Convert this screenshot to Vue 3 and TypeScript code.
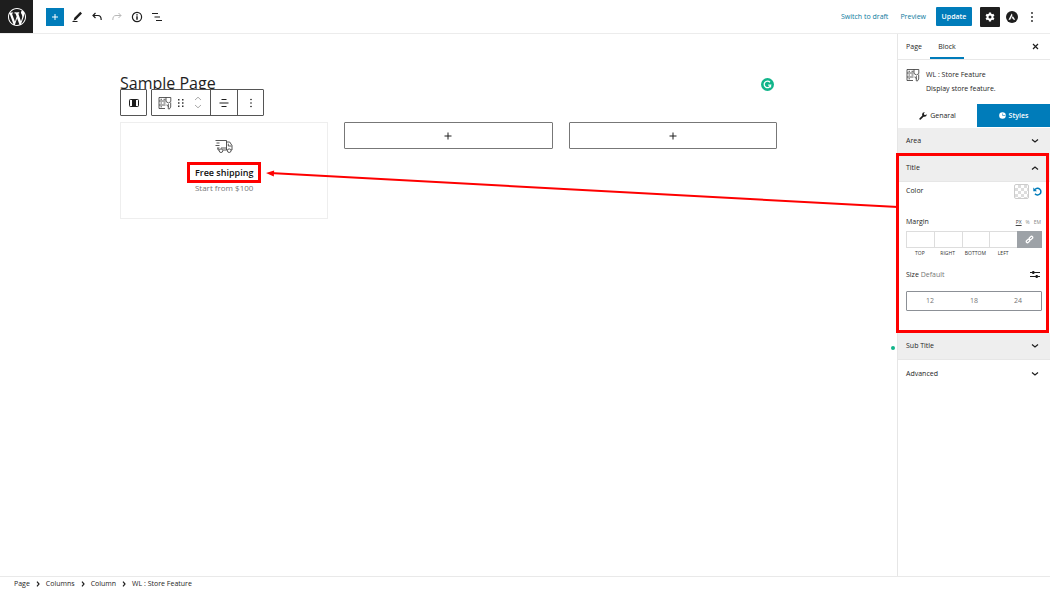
<script setup lang="ts">
import { nextTick, onBeforeUnmount, onMounted, reactive, ref } from 'vue'

const crumbs = ['Page', 'Columns', 'Column', 'WL : Store Feature']
const sides = ['Top', 'Right', 'Bottom', 'Left']
const units = ['PX', '%', 'EM']
const sizes = [12, 18, 24]
const margins = reactive<Record<string, string>>({ Top: '', Right: '', Bottom: '', Left: '' })
const unit = ref('PX')

const root = ref<HTMLElement | null>(null)
const label = ref<HTMLElement | null>(null)
const panel = ref<HTMLElement | null>(null)
const arrow = reactive({ x1: 0, y1: 0, x2: 0, y2: 0, head: '' })

function placeArrow() {
  if (!root.value || !label.value || !panel.value) return
  const r = root.value.getBoundingClientRect()
  const a = label.value.getBoundingClientRect()
  const b = panel.value.getBoundingClientRect()
  arrow.x1 = Math.round(b.left - r.left)
  arrow.y1 = Math.round(b.top - r.top + 52)
  arrow.x2 = Math.round(a.right - r.left + 5)
  arrow.y2 = Math.round(a.top - r.top + a.height / 2)
  const d = Math.atan2(arrow.y1 - arrow.y2, arrow.x1 - arrow.x2)
  const pt = (along: number, side: number) =>
    `${arrow.x2 + along * Math.cos(d) - side * Math.sin(d)},${arrow.y2 + along * Math.sin(d) + side * Math.cos(d)}`
  arrow.head = `${pt(0, 0)} ${pt(8, -3)} ${pt(8, 3)}`
}

onMounted(async () => {
  await nextTick()
  placeArrow()
  window.addEventListener('resize', placeArrow)
})
onBeforeUnmount(() => window.removeEventListener('resize', placeArrow))
</script>

<template>
  <div ref="root" class="editor">
    <header class="topbar">
      <a class="logo" href="#" aria-label="WordPress">
        <svg width="18" height="18" viewBox="0 0 20 20" fill="#fff"><path d="M20 10c0-5.51-4.49-10-10-10C4.48 0 0 4.49 0 10c0 5.52 4.48 10 10 10 5.51 0 10-4.48 10-10zM7.78 15.37L4.37 6.22c.55-.02 1.17-.08 1.17-.08.5-.06.44-1.13-.06-1.11 0 0-1.45.11-2.37.11-.18 0-.37 0-.58-.01C4.12 2.69 6.87 1.11 10 1.11c2.33 0 4.45.87 6.05 2.34-.68-.11-1.65.39-1.65 1.58 0 .74.45 1.36.9 2.1.35.61.55 1.36.55 2.46 0 1.49-1.4 5-1.4 5l-3.03-8.37c.54-.02.82-.17.82-.17.5-.05.44-1.25-.06-1.22 0 0-1.44.12-2.38.12-.87 0-2.33-.12-2.33-.12-.5-.03-.56 1.2-.06 1.22l.92.08 1.26 3.41zM17.41 10c.24-.64.74-1.87.43-4.25.7 1.29 1.05 2.71 1.05 4.25 0 3.29-1.73 6.24-4.4 7.78.97-2.59 1.94-5.2 2.92-7.78zM6.1 18.09C3.12 16.65 1.11 13.53 1.11 10c0-1.3.23-2.48.72-3.59C3.25 10.3 4.67 14.2 6.1 18.09zm4.03-6.63l2.58 6.98c-.86.29-1.76.45-2.71.45-.79 0-1.57-.11-2.29-.33.81-2.38 1.62-4.74 2.42-7.1z" /></svg>
      </a>
      <div class="tools">
        <button class="insert" type="button" aria-label="Add block">
          <svg width="8" height="8" viewBox="0 0 8 8" stroke="#fff" stroke-width="1"><path d="M4 1v6M1 4h6" /></svg>
        </button>
        <button class="tool" type="button" aria-label="Edit">
          <svg width="12" height="12" viewBox="0 0 12 12"><path d="M9.300 .8l1.700 1.600-5.600 5.900-2.900 1.400.9-2.900z" fill="#1e1e1e" /><path d="M1.500 10.500h5" stroke="#1e1e1e" /></svg>
        </button>
        <button class="tool" type="button" aria-label="Undo">
          <svg width="12" height="12" viewBox="0 0 12 12" fill="none" stroke="#1e1e1e" stroke-width="1.200"><path d="M4.500 2L2 4.500 4.500 7M2 4.500h5c2.200 0 3.200 1.500 3.200 4.500" /></svg>
        </button>
        <button class="tool" type="button" aria-label="Redo" disabled>
          <svg width="12" height="12" viewBox="0 0 12 12" fill="none" stroke="#b8b8b8"><path d="M7.500 2L10 4.500 7.500 7M10 4.500H5C2.800 4.500 1.800 6 1.800 9" /></svg>
        </button>
        <button class="tool" type="button" aria-label="Details">
          <svg width="12" height="12" viewBox="0 0 12 12" fill="none" stroke="#1e1e1e"><circle cx="6" cy="6" r="4.600" stroke-width="1.200" /><path d="M6 5.300v3.400M6 3.200v1.200" stroke-width="1.500" /></svg>
        </button>
        <button class="tool" type="button" aria-label="List view">
          <svg width="12" height="12" viewBox="0 0 12 12" stroke="#1e1e1e" stroke-width="1.200"><path d="M1 2.500h6M3.500 6h5.500M5 9.500h6" /></svg>
        </button>
      </div>
      <div class="actions">
        <button class="link" type="button">Switch to draft</button>
        <button class="link" type="button">Preview</button>
        <button class="update" type="button">Update</button>
        <button class="settings" type="button" aria-label="Settings">
          <svg width="12" height="12" viewBox="0 0 12 12"><g stroke="#fff" stroke-width="2.200"><path d="M6 1.500v9M2.100 3.800l7.800 4.400M2.100 8.200l7.800-4.400" /></g><circle cx="6" cy="6" r="3.400" fill="#fff" /><circle cx="6" cy="6" r="1.500" fill="#1e1e1e" /></svg>
        </button>
        <button class="plain" type="button" aria-label="Astra settings">
          <svg width="12" height="12" viewBox="0 0 12 12"><circle cx="6" cy="6" r="6" fill="#1e1e1e" /><path d="M5.700 2.500L2.500 8.800h1.700l2.300-4.700zM6.800 5.100L5.600 7.500h1.300l.6 1.300h1.700z" fill="#fff" /></svg>
        </button>
        <button class="plain" type="button" aria-label="Options">
          <svg width="12" height="12" viewBox="0 0 12 12" fill="#1e1e1e"><circle cx="6" cy="2" r=".9" /><circle cx="6" cy="6" r=".9" /><circle cx="6" cy="10" r=".9" /></svg>
        </button>
      </div>
    </header>

    <div class="body">
      <main class="canvas">
        <div class="content">
          <div class="title-row">
            <h1>Sample Page</h1>
            <svg class="grammarly" width="13" height="13" viewBox="0 0 13 13"><circle cx="6.500" cy="6.500" r="6.500" fill="#11b58a" /><path d="M9 4.200A3.300 3.300 0 1 0 9.700 7.200H7.200M9.500 7v2.500" fill="none" stroke="#fff" stroke-width="1.300" /></svg>
          </div>
          <div class="columns">
            <div class="block-toolbar" role="toolbar" aria-label="Block tools">
              <div class="group">
                <button class="parent" type="button" aria-label="Select column">
                  <svg width="12" height="12" viewBox="0 0 12 12"><rect x="1.500" y="2.500" width="9" height="7" rx=".8" fill="#fff" stroke="#1e1e1e" /><path d="M4 2h4v8H4z" fill="#1e1e1e" /></svg>
                </button>
              </div>
              <div class="group">
                <button class="kind" type="button" aria-label="Store Feature">
                  <svg width="14" height="14" viewBox="0 0 14 14" fill="none" stroke="#333" stroke-width=".8"><path d="M8 1.500H1V5h6.500M1 5v4h6.500M1 9v3.500h6M2.500 3.300h1.500M2.500 7h1.500M2.500 10.800h1.500M5.500 3.300h2M5.500 7h2M8 1.500h4.800v4L10.500 7 8 5.500zM8.500 9l2 1.500M10.300 8v5M12.700 6.500V11L11 13.500" /></svg>
                </button>
                <button class="drag" type="button" aria-label="Drag">
                  <svg width="8" height="10" viewBox="0 0 8 10" fill="#333"><path d="M1 1h1.500v1.500H1zM5 1h1.500v1.500H5zM1 4.300h1.500v1.500H1zM5 4.300h1.500v1.500H5zM1 7.600h1.500v1.500H1zM5 7.600h1.500v1.500H5z" /></svg>
                </button>
                <div class="movers">
                  <button type="button" aria-label="Move up" disabled>
                    <svg width="8" height="5" viewBox="0 0 8 5" fill="none" stroke="#aaa"><path d="M1 4l3-2.800L7 4" /></svg>
                  </button>
                  <button type="button" aria-label="Move down" disabled>
                    <svg width="8" height="5" viewBox="0 0 8 5" fill="none" stroke="#aaa"><path d="M1 1l3 2.800L7 1" /></svg>
                  </button>
                </div>
                <button class="cell" type="button" aria-label="Align">
                  <svg width="10" height="10" viewBox="0 0 10 10" stroke="#1e1e1e"><path d="M2.500 1.500h5M.5 5h9M2.500 8.500h5" /></svg>
                </button>
                <button class="cell" type="button" aria-label="More">
                  <svg width="10" height="10" viewBox="0 0 10 10" fill="#1e1e1e"><circle cx="5" cy="1.500" r=".8" /><circle cx="5" cy="5" r=".8" /><circle cx="5" cy="8.500" r=".8" /></svg>
                </button>
              </div>
            </div>
            <section class="feature">
              <svg width="18" height="15" viewBox="0 0 18 15" fill="none" stroke="#444" stroke-width=".9"><path d="M3 1.500h8.500v9.500H8M4 11H3V9M11.500 3h3.200l2.300 3.500V11h-1M12.500 11h-1M13.300 4.700v2.300h3.200M.5 1.500H3M1.500 4h3M.5 6.500h4M2 9h2.500M6 9h5.500" /><circle cx="6" cy="11.700" r="1.800" /><circle cx="14.200" cy="11.700" r="1.800" /></svg>
              <h2 ref="label">Free shipping</h2>
              <p>Start from $100</p>
            </section>
            <button v-for="n in 2" :key="n" class="appender" type="button" aria-label="Add block">
              <svg width="8" height="8" viewBox="0 0 8 8" stroke="#1e1e1e"><path d="M4 .5v7M.5 4h7" /></svg>
            </button>
          </div>
        </div>
        <span class="status-dot"></span>
      </main>

      <aside class="sidebar">
        <nav class="tabs">
          <button class="tab" type="button">Page</button>
          <button class="tab active" type="button">Block</button>
          <button class="close" type="button" aria-label="Close settings">
            <svg width="7" height="7" viewBox="0 0 7 7" stroke="#1e1e1e" stroke-width="1.200"><path d="M1 1l5 5M6 1L1 6" /></svg>
          </button>
        </nav>
        <div class="card">
          <svg width="14" height="14" viewBox="0 0 14 14" fill="none" stroke="#333" stroke-width=".8"><path d="M8 1.500H1V5h6.500M1 5v4h6.500M1 9v3.500h6M2.500 3.300h1.500M2.500 7h1.500M2.500 10.800h1.500M5.500 3.300h2M5.500 7h2M8 1.500h4.800v4L10.500 7 8 5.500zM8.500 9l2 1.500M10.300 8v5M12.700 6.500V11L11 13.500" /></svg>
          <div>
            <h2>WL : Store Feature</h2>
            <p>Display store feature.</p>
          </div>
        </div>
        <div class="modes">
          <button type="button">
            <svg width="8" height="8" viewBox="0 0 8 8"><path d="M1.200 6.800l3-3" stroke="#1e1e1e" stroke-width="1.700" stroke-linecap="round" /><path d="M7.700 2.200A2.300 2.300 0 1 1 5.800.2L4.900 1.500l.2 1.300 1.300.2z" fill="#1e1e1e" /></svg>
            Genaral
          </button>
          <button class="on" type="button">
            <svg width="7" height="7" viewBox="0 0 7 7"><circle cx="3.500" cy="3.500" r="3.300" fill="#fff" /><path d="M3.600 1.500v2h2.800" fill="none" stroke="#007cba" stroke-width=".6" /></svg>
            Styles
          </button>
        </div>

        <button class="panel-head shaded" type="button">
          Area
          <svg width="8" height="6" viewBox="0 0 8 6"><path d="M1 1.500l3 2.500 3-2.500" /></svg>
        </button>

        <section ref="panel" class="title-panel">
          <button class="panel-head shaded" type="button">
            Title
            <svg width="8" height="6" viewBox="0 0 8 6"><path d="M1 4.500L4 2l3 2.500" /></svg>
          </button>
          <div class="fields">
            <div class="row color-row">
              <span>Color</span>
              <div class="color-tools">
                <button class="swatch" type="button" aria-label="Choose color"></button>
                <button class="reset" type="button" aria-label="Reset color">
                  <svg width="9" height="9" viewBox="0 0 9 9"><path d="M2 2.600A3.300 3.300 0 1 1 2 6.700" fill="none" stroke="#007cba" stroke-width="1.500" /><path d="M.3.500v3.700H4z" fill="#007cba" /></svg>
                </button>
              </div>
            </div>
            <div class="row margin-row">
              <span>Margin</span>
              <div class="units">
                <button v-for="u in units" :key="u" type="button" :class="{ on: unit === u }" @click="unit = u">{{ u }}</button>
              </div>
            </div>
            <div class="box">
              <div v-for="s in sides" :key="s" class="side">
                <input :id="'m-' + s" v-model="margins[s]" type="text" />
                <label :for="'m-' + s">{{ s }}</label>
              </div>
              <button class="chain" type="button" aria-label="Link sides">
                <svg width="9" height="9" viewBox="0 0 9 9" fill="none" stroke="#fff" stroke-width="1.300"><rect x="-2" y="-1.200" width="4" height="2.400" rx="1.200" transform="translate(3 6) rotate(-45)" /><rect x="-2" y="-1.200" width="4" height="2.400" rx="1.200" transform="translate(6 3) rotate(-45)" /></svg>
              </button>
            </div>
            <div class="row size-row">
              <span>Size <em>Default</em></span>
              <button type="button" aria-label="Set custom size">
                <svg width="10" height="9" viewBox="0 0 10 9" stroke="#1e1e1e"><path d="M0 2.500h10M0 6.500h10" stroke-width="1.200" /><path d="M3.300 1v3M6.700 5v3" stroke-width="2" /></svg>
              </button>
            </div>
            <div class="sizes">
              <button v-for="n in sizes" :key="n" type="button">{{ n }}</button>
            </div>
          </div>
        </section>

        <button class="panel-head shaded" type="button">
          Sub Title
          <svg width="8" height="6" viewBox="0 0 8 6"><path d="M1 1.500l3 2.500 3-2.500" /></svg>
        </button>
        <button class="panel-head last" type="button">
          Advanced
          <svg width="8" height="6" viewBox="0 0 8 6"><path d="M1 1.500l3 2.500 3-2.500" /></svg>
        </button>
      </aside>
    </div>

    <footer class="crumbs">
      <template v-for="(c, i) in crumbs" :key="c">
        <svg v-if="i" width="4" height="6" viewBox="0 0 4 6" fill="none" stroke="#1e1e1e" stroke-width="1.200"><path d="M1 .7L3 3 1 5.300" /></svg>
        <a href="#">{{ c }}</a>
      </template>
    </footer>

    <svg class="arrow">
      <line :x1="arrow.x1" :y1="arrow.y1" :x2="arrow.x2 + 4" :y2="arrow.y2" stroke="#fe0000" stroke-width="2" />
      <polygon :points="arrow.head" fill="#fe0000" />
    </svg>
  </div>
</template>

<style>
body {
  margin: 0;
}
</style>

<style scoped>
.editor,
.editor * {
  box-sizing: border-box;
}
.editor {
  position: relative;
  display: flex;
  flex-direction: column;
  min-height: 100vh;
  background: #fff;
  color: #1e1e1e;
  font: 7px/10px 'Open Sans', 'Noto Sans', sans-serif;
}
button {
  display: flex;
  align-items: center;
  justify-content: center;
  margin: 0;
  padding: 0;
  border: 0;
  background: none;
  color: inherit;
  font: inherit;
}
svg {
  display: block;
  flex: none;
}
h1,
h2,
p {
  margin: 0;
}
.topbar {
  display: flex;
  align-items: center;
  height: 34px;
  border-bottom: 1px solid #ececec;
}
.logo {
  display: flex;
  align-items: center;
  justify-content: center;
  width: 33px;
  height: 33px;
  background: #1e1e1e;
}
.tools {
  display: flex;
  align-items: center;
  gap: 8px;
  margin-left: 13px;
}
.insert {
  width: 18px;
  height: 18px;
  margin-right: -1px;
  background: #007cba;
}
.tool {
  width: 12px;
  height: 18px;
}
.actions {
  display: flex;
  align-items: center;
  margin-left: auto;
  padding-right: 12px;
}
.link {
  margin-right: 12px;
  color: #0d7a9e;
}
.link + .update {
  margin-left: -2px;
}
.update {
  width: 36px;
  height: 19px;
  margin-right: 8px;
  border-radius: 1px;
  background: #007cba;
  color: #fff;
  font-weight: 600;
}
.settings {
  width: 20px;
  height: 20px;
  margin-right: 6px;
  border-radius: 1px;
  background: #1e1e1e;
}
.plain + .plain {
  margin-left: 8px;
}
.body {
  display: flex;
  flex: 1;
}
.canvas {
  position: relative;
  flex: 1;
  padding: 36px 120px 0;
}
.title-row {
  position: relative;
  height: 52px;
}
h1 {
  font-size: 16px;
  font-weight: 400;
  line-height: 26px;
}
.grammarly {
  position: absolute;
  top: 8px;
  right: 3px;
}
.columns {
  position: relative;
  display: grid;
  grid-template-columns: repeat(3, 1fr);
  align-items: start;
  gap: 16px;
}
.block-toolbar {
  position: absolute;
  top: -33px;
  left: 0;
  display: flex;
  gap: 4px;
}
.group {
  display: flex;
  height: 27px;
  border: 1px solid #555;
  border-radius: 1px;
  background: #fff;
}
.group button {
  height: 100%;
}
.parent {
  width: 25px;
}
.kind {
  width: 25px;
}
.drag {
  width: 8px;
}
.movers {
  display: flex;
  flex-direction: column;
  justify-content: center;
  gap: 3px;
  width: 25px;
}
.group .movers button {
  height: 5px;
}
.group .cell {
  width: 27px;
  border-left: 1px solid #555;
}
.group .cell:last-child {
  width: 26px;
}
.feature {
  display: flex;
  flex-direction: column;
  align-items: center;
  min-height: 97px;
  padding-top: 16px;
  border: 1px solid #eee;
}
.feature h2 {
  margin-top: 8px;
  padding: 0 5px;
  border: 3px solid #fe0000;
  color: #111;
  font-size: 9px;
  font-weight: 600;
  line-height: 15px;
}
.feature p {
  color: #777;
  font-size: 8px;
  line-height: 9px;
}
.appender {
  height: 27px;
  border: 1px solid #777;
  border-radius: 1px;
}
.status-dot {
  position: absolute;
  top: 312px;
  right: 2px;
  width: 4px;
  height: 4px;
  border-radius: 50%;
  background: #11b58a;
}
.sidebar {
  flex: none;
  width: 153px;
  border-left: 1px solid #e6e6e6;
}
.tabs {
  display: flex;
  height: 26px;
  border-bottom: 1px solid #e8e8e8;
}
.tab {
  width: 32px;
  padding-top: 2px;
  border-bottom: 2px solid transparent;
}
.tab.active {
  width: 34px;
  border-color: #007cba;
}
.close {
  width: 14px;
  margin-left: auto;
  margin-right: 8px;
}
.card {
  display: flex;
  gap: 6px;
  height: 44px;
  padding: 8px;
}
.card h2 {
  font-size: 7px;
  font-weight: 400;
  line-height: 14px;
}
.card p {
  line-height: 14px;
}
.modes {
  display: flex;
  height: 24px;
}
.modes button {
  flex: 1;
  gap: 3px;
  height: 23px;
}
.modes .on {
  flex: none;
  width: 73px;
  background: #007cba;
  color: #fff;
  font-weight: 600;
}
.panel-head {
  justify-content: space-between;
  width: 100%;
  height: 27px;
  padding: 0 11px 0 8px;
  border-bottom: 1px solid #e6e6e6;
}
.panel-head.shaded {
  background: #eee;
}
.panel-head.last {
  border-bottom: 0;
}
.panel-head svg {
  fill: none;
  stroke: #1e1e1e;
  stroke-width: 1.2;
}
.title-panel {
  position: relative;
}
.title-panel::after {
  content: '';
  position: absolute;
  inset: -2px 1px 0 -2px;
  border: 3px solid #fe0000;
  pointer-events: none;
}
.fields {
  padding: 0 8px 22px;
}
.row {
  display: flex;
  align-items: center;
  justify-content: space-between;
}
.color-row {
  height: 18px;
}
.color-tools {
  display: flex;
  align-items: center;
  gap: 4px;
}
.swatch {
  width: 15px;
  height: 15px;
  border: 1px solid #ccc;
  border-radius: 2px;
  background: repeating-conic-gradient(#ddd 0 25%, #fff 0 50%) 0 0 / 6px 6px;
}
.margin-row {
  height: 12px;
  margin-top: 16px;
}
.units {
  display: flex;
  gap: 4px;
  padding-right: 1px;
  color: #888;
  font-size: 5px;
}
.units .on {
  color: #444;
  text-decoration: underline;
}
.box {
  display: flex;
  align-items: flex-start;
  margin-top: 3px;
}
.side {
  flex: 1;
}
.side input {
  display: block;
  width: 100%;
  height: 17px;
  padding: 0 2px;
  border: 1px solid #ddd;
  border-right-width: 0;
  font: inherit;
}
.side label {
  display: block;
  color: #333;
  font-size: 5px;
  line-height: 10px;
  text-align: center;
  text-transform: uppercase;
}
.chain {
  width: 25px;
  height: 17px;
  background: #9da2a7;
}
.size-row {
  align-items: flex-start;
  height: 12px;
  margin-top: 12px;
  padding-right: 2px;
}
.size-row em {
  color: #757575;
  font-style: normal;
}
.sizes {
  display: flex;
  height: 20px;
  margin-top: 9px;
  padding: 0 1px;
  border: 1px solid #8c9096;
  border-radius: 1px;
}
.sizes button {
  flex: 1;
  color: #757575;
}
.crumbs {
  display: flex;
  align-items: center;
  gap: 6px;
  height: 14px;
  padding-top: 1px;
  padding-left: 14px;
  border-top: 1px solid #e9e9e9;
}
.crumbs a {
  color: inherit;
  text-decoration: none;
}
.arrow {
  position: absolute;
  inset: 0;
  width: 100%;
  height: 100%;
  pointer-events: none;
}
</style>
